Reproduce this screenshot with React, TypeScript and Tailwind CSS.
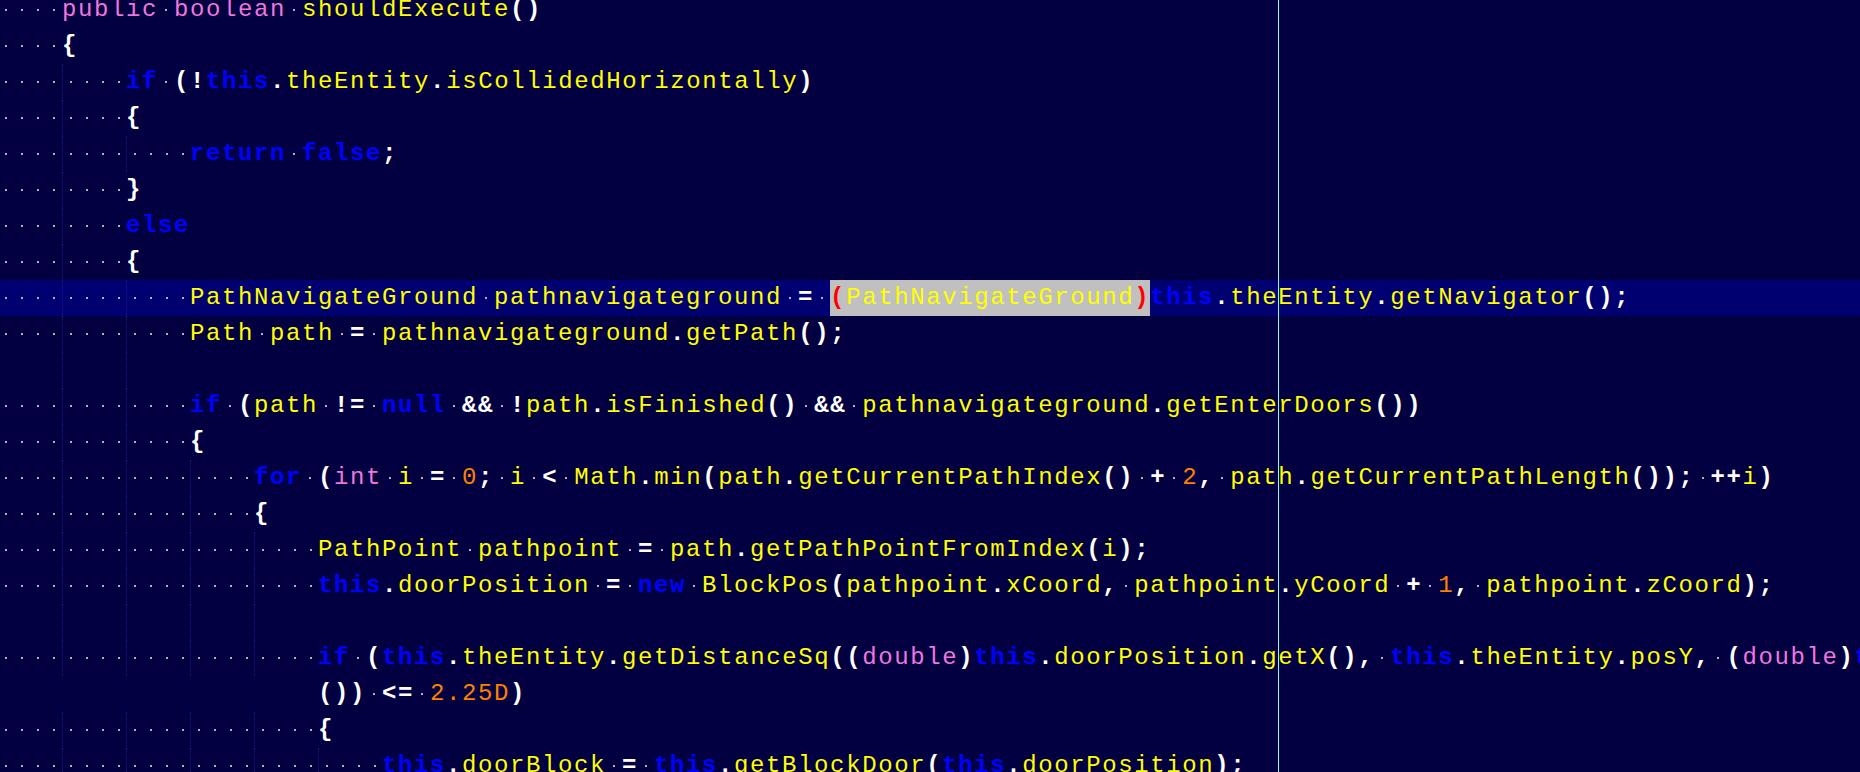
import React from "react";

type Line = {
  indent: number;
  text: string;
  guides?: number; // indent used for guides when different (blank lines)
  wrap?: boolean; // wrapped continuation, no dots or guides
  current?: boolean;
  select?: [number, number];
};

const KEYWORDS = new Set(["if", "else", "for", "return", "this", "new", "null", "false", "true"]);
const TYPES = new Set(["public", "boolean", "int", "double", "void", "private"]);

const lines: Line[] = [
  { indent: 4, text: "public boolean shouldExecute()" },
  { indent: 4, text: "{" },
  { indent: 8, text: "if (!this.theEntity.isCollidedHorizontally)" },
  { indent: 8, text: "{" },
  { indent: 12, text: "return false;" },
  { indent: 8, text: "}" },
  { indent: 8, text: "else" },
  { indent: 8, text: "{" },
  {
    indent: 12,
    text: "PathNavigateGround pathnavigateground = (PathNavigateGround)this.theEntity.getNavigator();",
    current: true,
    select: [40, 60],
  },
  { indent: 12, text: "Path path = pathnavigateground.getPath();" },
  { indent: 0, text: "", guides: 12 },
  { indent: 12, text: "if (path != null && !path.isFinished() && pathnavigateground.getEnterDoors())" },
  { indent: 12, text: "{" },
  {
    indent: 16,
    text: "for (int i = 0; i < Math.min(path.getCurrentPathIndex() + 2, path.getCurrentPathLength()); ++i)",
  },
  { indent: 16, text: "{" },
  { indent: 20, text: "PathPoint pathpoint = path.getPathPointFromIndex(i);" },
  {
    indent: 20,
    text: "this.doorPosition = new BlockPos(pathpoint.xCoord, pathpoint.yCoord + 1, pathpoint.zCoord);",
  },
  { indent: 0, text: "", guides: 20 },
  {
    indent: 20,
    text: "if (this.theEntity.getDistanceSq((double)this.doorPosition.getX(), this.theEntity.posY, (double)this.doorPosition.getZ",
  },
  { indent: 20, text: "()) <= 2.25D)", wrap: true },
  { indent: 20, text: "{" },
  { indent: 24, text: "this.doorBlock = this.getBlockDoor(this.doorPosition);" },
];

const TOKEN_RE = /(\s+|[A-Za-z_]\w*|\d[\d.]*[A-Za-z]?|&&|\+\+|!=|<=|>=|==|.)/g;

function tokenize(text: string) {
  return text.match(TOKEN_RE) ?? [];
}

function Dot({ show = true }: { show?: boolean }) {
  return (
    <span className="flex w-4 shrink-0 items-center justify-center">
      {show && <span className="h-[2px] w-[2px] bg-[#b8b498]" />}
    </span>
  );
}

function Token({ t, brace }: { t: string; brace?: boolean }) {
  if (/^\s+$/.test(t)) {
    return (
      <>
        {t.split("").map((_, i) => (
          <Dot key={i} />
        ))}
      </>
    );
  }
  let cls = "text-white font-bold";
  if (brace && (t === "(" || t === ")")) cls = "text-[#ff0000] font-bold";
  else if (/^[A-Za-z_]/.test(t)) {
    if (KEYWORDS.has(t)) cls = "text-[#0000ff] font-bold";
    else if (TYPES.has(t)) cls = "text-[#ee77dd]";
    else cls = "text-[#ffff00]";
  } else if (/^\d/.test(t)) cls = "text-[#ff8000]";
  return <span className={`shrink-0 leading-9 ${cls}`}>{t}</span>;
}

function Tokens({ text, brace }: { text: string; brace?: boolean }) {
  return (
    <>
      {tokenize(text).map((t, i) => (
        <Token key={i} t={t} brace={brace} />
      ))}
    </>
  );
}

function Indent({ cols, dots, wrap }: { cols: number; dots: boolean; wrap?: boolean }) {
  const groups = Math.floor(cols / 4);
  return (
    <>
      {Array.from({ length: groups }).map((_, g) => (
        <span
          key={g}
          className={`flex w-16 shrink-0 ${
            g > 0 && !wrap ? "border-l border-dotted border-[#1a1a8c]" : ""
          }`}
        >
          {[0, 1, 2, 3].map((d) => (
            <Dot key={d} show={dots && !wrap} />
          ))}
        </span>
      ))}
    </>
  );
}

function CodeLine({ line }: { line: Line }) {
  const body = line.select ? (
    <>
      <Tokens text={line.text.slice(0, line.select[0])} />
      <span className="flex shrink-0 bg-[#c0c0c0]">
        <Tokens text={line.text.slice(line.select[0], line.select[1])} brace />
      </span>
      <Tokens text={line.text.slice(line.select[1])} />
    </>
  ) : (
    <Tokens text={line.text} />
  );

  return (
    <div className={`flex h-9 whitespace-pre ${line.current ? "bg-[#000070]" : ""}`}>
      <div className="-ml-[2px] flex">
        {line.text === "" ? (
          <Indent cols={line.guides ?? 0} dots={false} />
        ) : (
          <Indent cols={line.indent} dots wrap={line.wrap} />
        )}
        {body}
      </div>
    </div>
  );
}

export default function App() {
  return (
    <div className="relative h-[772px] w-[1860px] overflow-hidden bg-[#020040] font-['Liberation_Mono',monospace] text-[24px] tracking-[1.6px]">
      <div className="-mt-[8px] flex flex-col">
        {lines.map((line, i) => (
          <CodeLine key={i} line={line} />
        ))}
      </div>
      {/* edge column marker at col 80 */}
      <div className="absolute bottom-0 left-[1278px] top-0 w-px bg-[#7fffff]" />
    </div>
  );
}
